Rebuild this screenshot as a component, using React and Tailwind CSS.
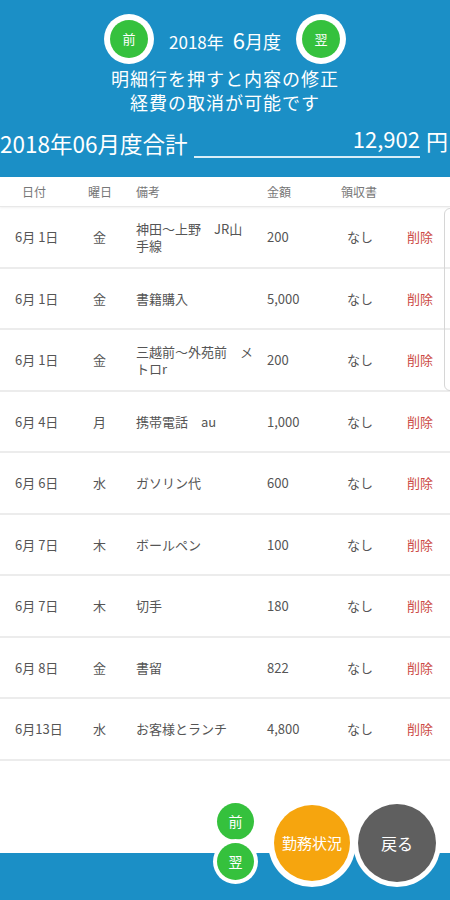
import React from "react";

const rows = [
  { date: "6月 1日", day: "金", note: "神田～上野　JR山手線", amount: "200" },
  { date: "6月 1日", day: "金", note: "書籍購入", amount: "5,000" },
  { date: "6月 1日", day: "金", note: "三越前～外苑前　メトロr", amount: "200" },
  { date: "6月 4日", day: "月", note: "携帯電話　au", amount: "1,000" },
  { date: "6月 6日", day: "水", note: "ガソリン代", amount: "600" },
  { date: "6月 7日", day: "木", note: "ボールペン", amount: "100" },
  { date: "6月 7日", day: "木", note: "切手", amount: "180" },
  { date: "6月 8日", day: "金", note: "書留", amount: "822" },
  { date: "6月13日", day: "水", note: "お客様とランチ", amount: "4,800" },
];

function RoundButton({ label, className }) {
  return (
    <div className={"flex items-center justify-center rounded-full bg-white " + className}>
      {label}
    </div>
  );
}

export default function App() {
  return (
    <div
      className="relative flex h-[900px] w-[450px] flex-col overflow-hidden bg-white"
      style={{ fontFamily: '"Noto Sans CJK JP", "Noto Sans", Roboto, sans-serif' }}
    >
      {/* header */}
      <div className="h-[177px] bg-[#1b8fc6] text-white">
        <div className="flex items-center justify-center pt-[14px]">
          <div className="flex h-[50px] w-[50px] items-center justify-center rounded-full bg-white">
            <div className="flex h-[38px] w-[38px] items-center justify-center rounded-full bg-[#35c13d] text-[13px]">前</div>
          </div>
          <div className="mx-[15px] flex items-baseline">
            <span className="text-[17px]">2018年</span>
            <span className="ml-[9px] text-[22px]">6</span>
            <span className="text-[18px]">月度</span>
          </div>
          <div className="flex h-[50px] w-[50px] items-center justify-center rounded-full bg-white">
            <div className="flex h-[38px] w-[38px] items-center justify-center rounded-full bg-[#35c13d] text-[13px]">翌</div>
          </div>
        </div>
        <div className="mt-[2px] text-center text-[18px] leading-[24px] tracking-[1px]">
          <div>明細行を押すと内容の修正</div>
          <div>経費の取消が可能です</div>
        </div>
        <div className="mt-[10px] flex items-end">
          <div className="text-[22.5px] leading-[30px]">2018年06月度合計</div>
          <div className="ml-[7px] flex-1 border-b-2 border-[#d9eef8] pb-[4px] text-right text-[22px] leading-[28px]">12,902</div>
          <div className="ml-[6px] pb-[4px] pr-[2px] text-[22px] leading-[28px]">円</div>
        </div>
      </div>

      {/* table header */}
      <div className="grid h-[30px] grid-cols-[66px_48px_131px_74px_1fr] items-center border-b border-[#e8e8e8] pl-[22px] text-[12px] text-[#777] shadow-[0_1px_2px_rgba(0,0,0,0.06)]">
        <div>日付</div>
        <div>曜日</div>
        <div>備考</div>
        <div>金額</div>
        <div>領収書</div>
      </div>

      {/* rows */}
      <div className="relative flex-1">
        <div className="absolute right-[-8px] top-[1px] h-[183px] w-[14px] rounded-l-[6px] border border-[#d6d6d6]" />
        {rows.map((r, i) => (
          <div
            key={i}
            className="grid h-[61.5px] grid-cols-[78px_43px_131px_80px_60px_1fr] items-center border-b-2 border-[#ececec] pl-[15px] text-[13px] text-[#555]"
          >
            <div>{r.date}</div>
            <div>{r.day}</div>
            <div className="w-[118px] leading-[17px]">{r.note}</div>
            <div>{r.amount}</div>
            <div>なし</div>
            <div className="text-[#cc4a44]">削除</div>
          </div>
        ))}
      </div>

      {/* footer */}
      <div className="relative h-[47px] bg-[#1b8fc6]">
        <RoundButton
          label={<div className="flex h-[37px] w-[37px] items-center justify-center rounded-full bg-[#35c13d] text-[14px] text-white">前</div>}
          className="absolute left-[213px] top-[-54px] h-[45px] w-[45px]"
        />
        <RoundButton
          label={<div className="flex h-[37px] w-[37px] items-center justify-center rounded-full bg-[#35c13d] text-[14px] text-white">翌</div>}
          className="absolute left-[213px] top-[-14px] h-[45px] w-[45px]"
        />
        <RoundButton
          label={<div className="flex h-[76px] w-[76px] items-center justify-center rounded-full bg-[#f6a50e] text-[15px] text-white">勤務状況</div>}
          className="absolute left-[268px] top-[-54px] h-[88px] w-[88px]"
        />
        <RoundButton
          label={<div className="flex h-[78px] w-[78px] items-center justify-center rounded-full bg-[#5f5f5f] text-[16px] text-white">戻る</div>}
          className="absolute left-[353px] top-[-54px] h-[88px] w-[88px]"
        />
      </div>
    </div>
  );
}
